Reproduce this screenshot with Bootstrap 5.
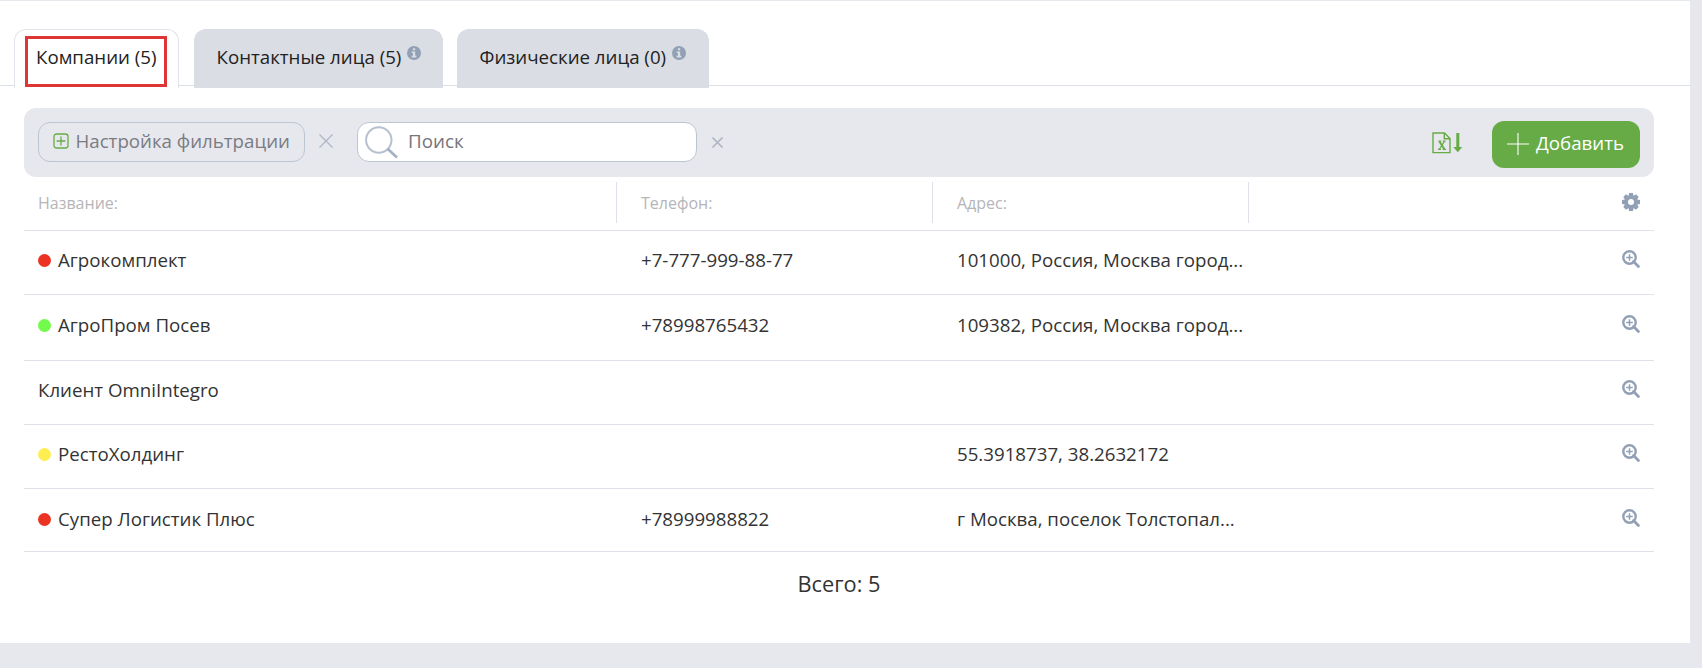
<!DOCTYPE html>
<html lang="ru">
<head>
<meta charset="utf-8">
<meta name="viewport" content="width=device-width, initial-scale=1">
<title>Компании</title>
<link rel="stylesheet" href="https://cdn.jsdelivr.net/npm/bootstrap@5.3.0/dist/css/bootstrap.min.css">
<style>
  body { background: #e7e8ed; font-family: "Open Sans", sans-serif; font-size: 18.7px; line-height: 26px; color: #333; overflow: hidden; }
  .panel { width: 1690px; height: 642px; margin-top: 1px; }
  .panel-tabs { height: 85px; padding: 28px 0 0 14px; border-bottom: 1px solid #dcdfe8; }
  .panel-tabs .nav-link { height: 59px; padding: 14px 0 0 21.5px; border: 1px solid #dadde4; border-bottom: 0; border-radius: 12px 12px 0 0; background: #dadde4; color: #222; margin: 0; }
  .panel-tabs .nav-link.active { width: 165px; background: #fff; border-color: #e0e3ea; padding: 5.5px 0 0 10px; color: #222; }
  .tab-frame { width: 142px; height: 51px; border: 3.5px solid #dd3735; padding: 5.6px 0 0 8px; white-space: nowrap; }
  .tab-people { width: 249px; margin-left: 15px !important; }
  .tab-persons { width: 252px; margin-left: 14px !important; }
  .info { margin: 2px 0 0 6px; }
  .toolbar { margin: 22px 36px 0 24px; height: 69px; padding: 0 14px; background: #e7e8ed; border-radius: 12px; }
  .filter-btn { width: 267px; height: 40px; margin-bottom: 1px; padding: 0 0 0 14px; border: 1px solid #bcc5d2; border-radius: 12px; color: #7b7b83; background: none; font-size: inherit; line-height: 26px; }
  .filter-btn svg { margin-bottom: 2px; }
  .filter-btn span { margin: -2px 0 0 6.5px; }
  .search-box { width: 340px; height: 40px; margin: 0 0 1px 25px; padding-left: 7px; border: 1px solid #bcc5d2; border-radius: 12px; background: #fff; }
  .search-box svg { flex: none; margin-top: 1px; }
  .search-box input { font-size: 18.8px; line-height: 26px; color: #757575; padding: 0; margin: -2px 0 0 9px; }
  .search-box input::placeholder { color: #75757d; opacity: 1; }
  .add-btn, .add-btn:hover { width: 148px; height: 47px; margin: 3px 0 0 29px; padding: 0 0 0 15px; border: 0; border-radius: 12px; background: #67ab46; color: #fff; font-size: inherit; line-height: 26px; }
  .add-btn span { margin: -2px 0 0 7px; }
  .clear-filter { margin: 0 -1px 3px 14px; }
  .grid { margin: 0 36px 0 24px; }
  .grid-line { display: grid; grid-template-columns: 592px 316px 316px 1fr; border-bottom: 1px solid #dfe1e8; align-items: center; height: 64px; padding-bottom: 5px; }
  .grid-line > div { padding-left: 25px; white-space: nowrap; }
  .grid-line > div:first-child { padding-left: 14px; }
  .grid-head { height: 54px; padding: 0; font-size: 16px; color: #b5b5b8; }
  .grid-head > div { height: 41px; line-height: 43px; border-right: 1px solid #dfe1e8; margin-bottom: 3px; }
  .grid-head > div:first-child { width: 593px; }
  .grid-head > div:nth-child(2), .grid-head > div:nth-child(3) { width: 317px; }
  .grid-head > div:last-child { border: 0; }
  .grid-line > .act { padding: 0 14px 0 0; display: flex; justify-content: flex-end; }
  .act svg { margin-bottom: 2px; }
  .grid-head .act svg { margin-bottom: 0; }
  .tall { height: 66px; }
  .last-line { height: 63px; padding-bottom: 3px; }
  .dot { width: 13px; height: 13px; border-radius: 50%; margin: 1px 7px 0 0; flex: none; }
  .dot-red { background: #ec3323; } .dot-green { background: #73fb4b; } .dot-yellow { background: #fdef52; }
  .total { font-size: 21.8px; line-height: 30px; margin: 17px 36px 0 24px; }
</style>
</head>
<body>
<svg class="d-none">
  <symbol id="zoom" viewBox="0 0 18 18"><path d="M11.6 11.6 16.4 16.4" stroke="#92a0b5" stroke-width="2.8" stroke-linecap="round"/><circle cx="7.5" cy="7.5" r="6.2" fill="none" stroke="#92a0b5" stroke-width="2.4"/><path d="M7.5 4.2v6.6M4.2 7.5h6.6" stroke="#92a0b5" stroke-width="1.5"/></symbol>
  <symbol id="info" viewBox="0 0 14 14"><circle cx="7" cy="7" r="7" fill="#92a0b5"/><path d="M5.9 2.2h2.3v2H5.9zM4.7 5.4h3.5v4.3h1.1v1.7H4.7V9.7h1.2V7.1H4.7z" fill="#dadde4"/></symbol>
</svg>
<main class="panel bg-white">
  <nav class="nav panel-tabs flex-nowrap">
    <a class="nav-link active"><div class="tab-frame">Компании (5)</div></a>
    <a class="nav-link tab-people d-flex align-items-start">Контактные лица (5)<svg class="info" width="14" height="14"><use href="#info"/></svg></a>
    <a class="nav-link tab-persons d-flex align-items-start">Физические лица (0)<svg class="info" width="14" height="14"><use href="#info"/></svg></a>
  </nav>

  <div class="toolbar d-flex align-items-center">
    <button class="filter-btn d-flex align-items-center">
      <svg width="16" height="16" viewBox="0 0 16 16" fill="none" stroke="#67ab46" stroke-width="1.3"><rect x="1" y="1" width="14" height="14" rx="2.5"/><path d="M8 3.6v8.8M3.6 8h8.8"/></svg>
      <span class="text-nowrap">Настройка фильтрации</span>
    </button>
    <svg class="clear-filter" width="14" height="14" viewBox="0 0 14 14" stroke="#b0b7c4" stroke-width="1.3"><path d="M.5.5l13 13M13.5.5l-13 13"/></svg>
    <div class="search-box d-flex align-items-center">
      <svg width="34" height="34" viewBox="0 0 34 34" fill="none"><circle cx="13.8" cy="14" r="12.7" stroke="#b7c0cf" stroke-width="2"/><path d="M22.5 22.8 32 31.5" stroke="#a6b1c4" stroke-width="2.8"/></svg>
      <input class="form-control border-0 shadow-none bg-transparent" type="text" placeholder="Поиск">
    </div>
    <svg style="margin-left:15px" width="11" height="11" viewBox="0 0 11 11" stroke="#b0b7c4" stroke-width="1.6"><path d="M.5.5l10 10M10.5.5l-10 10"/></svg>
    <svg class="ms-auto" width="31" height="22" viewBox="0 0 31 22" fill="none" stroke="#67ab46" stroke-width="1.4"><path d="M1 1h11.5l5.5 5.5V20.6H1zM12.3 1v5.8H18"/><path d="M6.3 9.2h3M10.9 9.2h2.8M6 17.3h2.9M10.6 17.3h3.3" stroke-width="1.2"/><path d="M7.4 9.4l5 7.8" stroke-width="1.9"/><path d="M12.4 9.4l-5 7.8" stroke-width="1.2"/><path d="M25.8 1v15" stroke-width="3"/><path d="M21.3 15h9l-4.5 5.2z" fill="#67ab46" stroke="none"/></svg>
    <button class="btn add-btn d-flex align-items-center">
      <svg width="22" height="22" viewBox="0 0 22 22" stroke="#fff" stroke-width="1.1"><path d="M11 0v22M0 11h22"/></svg>
      <span>Добавить</span>
    </button>
  </div>

  <div class="grid">
    <div class="grid-line grid-head">
      <div>Название:</div><div>Телефон:</div><div>Адрес:</div>
      <div class="act align-items-center"><svg width="18" height="18" viewBox="-9 -9 18 18"><g fill="#92a0b5"><circle r="6.8"/><path id="teeth" d="M-1.9-9h3.8l.6 3h-5zM-1.9 9h3.8l.6-3h-5zM-9-1.9v3.8l3 .6v-5zM9-1.9v3.8l-3 .6v-5z"/><use href="#teeth" transform="rotate(45)"/></g><circle r="3" fill="#fff"/></svg></div>
    </div>
    <div class="grid-line">
      <div class="d-flex align-items-center"><span class="dot dot-red"></span>Агрокомплект</div><div>+7-777-999-88-77</div><div>101000, Россия, Москва город...</div>
      <div class="act"><svg width="18" height="18"><use href="#zoom"/></svg></div>
    </div>
    <div class="grid-line tall">
      <div class="d-flex align-items-center"><span class="dot dot-green"></span>АгроПром Посев</div><div>+78998765432</div><div>109382, Россия, Москва город...</div>
      <div class="act"><svg width="18" height="18"><use href="#zoom"/></svg></div>
    </div>
    <div class="grid-line">
      <div>Клиент OmniIntegro</div><div></div><div></div>
      <div class="act"><svg width="18" height="18"><use href="#zoom"/></svg></div>
    </div>
    <div class="grid-line">
      <div class="d-flex align-items-center"><span class="dot dot-yellow"></span>РестоХолдинг</div><div></div><div>55.3918737, 38.2632172</div>
      <div class="act"><svg width="18" height="18"><use href="#zoom"/></svg></div>
    </div>
    <div class="grid-line last-line">
      <div class="d-flex align-items-center"><span class="dot dot-red"></span>Супер Логистик Плюс</div><div>+78999988822</div><div>г Москва, поселок Толстопал...</div>
      <div class="act"><svg width="18" height="18"><use href="#zoom"/></svg></div>
    </div>
  </div>
  <div class="total text-center">Всего: 5</div>
</main>
<script src="https://cdn.jsdelivr.net/npm/bootstrap@5.3.0/dist/js/bootstrap.bundle.min.js"></script>
</body>
</html>
